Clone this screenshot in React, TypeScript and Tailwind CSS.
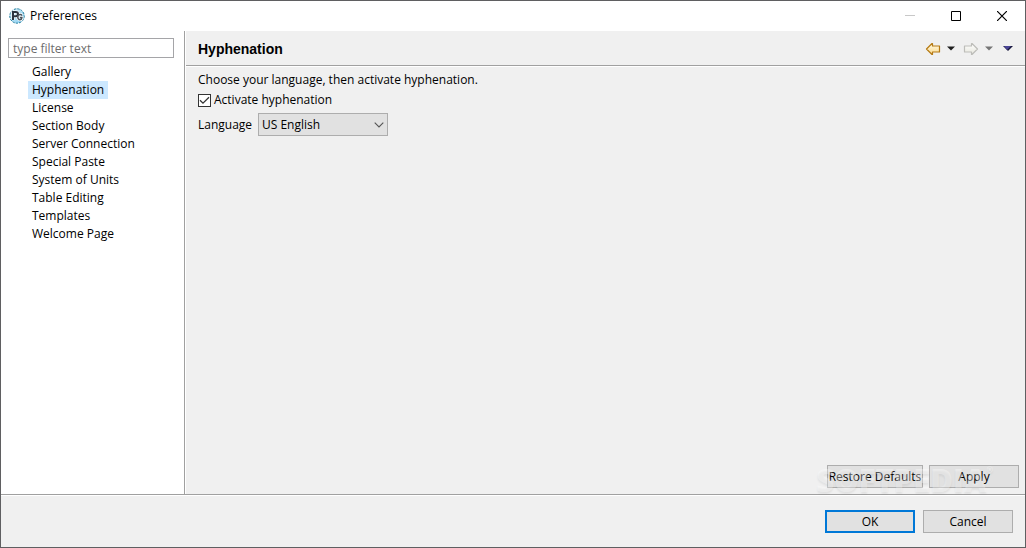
import { useState } from "react";

const pages = [
  "Gallery",
  "Hyphenation",
  "License",
  "Section Body",
  "Server Connection",
  "Special Paste",
  "System of Units",
  "Table Editing",
  "Templates",
  "Welcome Page",
];

function AppIcon() {
  return (
    <svg width="16" height="16" viewBox="0 0 16 16" aria-hidden="true">
      <defs>
        <linearGradient id="badge" x1="0" y1="0" x2="1" y2="1">
          <stop offset="0" stopColor="#e4f6fd" />
          <stop offset="1" stopColor="#7cc8ee" />
        </linearGradient>
      </defs>
      <circle cx="8" cy="8" r="7.2" fill="url(#badge)" stroke="#1d7a9c" strokeWidth="1" strokeDasharray="2.4 1" />
      <path d="M4 12V4H6.8Q9 4 9 6.1Q9 8.2 6.8 8.2H4M13 7.4Q12.2 6.5 11 6.6Q8.8 7 8.8 9.2Q9 11.6 11 11.7Q12.8 11.5 12.9 9.6H11" fill="none" stroke="#ffffff" strokeWidth="3" />
      <path d="M4 12V4H6.8Q9 4 9 6.1Q9 8.2 6.8 8.2H4" fill="none" stroke="#2b3440" strokeWidth="2" />
      <path d="M13 7.4Q12.2 6.5 11 6.6Q8.8 7 8.8 9.2Q9 11.6 11 11.7Q12.8 11.5 12.9 9.6H11" fill="none" stroke="#4a525b" strokeWidth="1.5" />
    </svg>
  );
}

function Arrow({ forward = false }: { forward?: boolean }) {
  const id = forward ? "arrow-forward" : "arrow-back";
  return (
    <svg width="16" height="14" viewBox="0 0 16 14" aria-hidden="true">
      <defs>
        <linearGradient id={id} x1="0" y1="0" x2="0" y2="1">
          <stop offset="0" stopColor={forward ? "#ffffff" : "#fffbe8"} />
          <stop offset="1" stopColor={forward ? "#e6e6dc" : "#fbd98a"} />
        </linearGradient>
      </defs>
      <path
        d={forward ? "M14.5 7L9 1.5H8.5V4H1.5V10H8.5V12.5H9Z" : "M1.5 7L7 1.5H7.5V4H14.5V10H7.5V12.5H7Z"}
        fill={`url(#${id})`}
        stroke={forward ? "#bdbdb9" : "#b57a14"}
        strokeWidth="1.2"
        strokeLinejoin="round"
      />
    </svg>
  );
}

function Triangle({ color }: { color: string }) {
  return (
    <svg width="8" height="5" viewBox="0 0 8 5" aria-hidden="true">
      <path d="M0 .5H8L4 4.5Z" fill={color} />
    </svg>
  );
}

const buttonClass = "h-[23px] border border-[#adadad] bg-[#e1e1e1] text-center leading-4";

export default function App() {
  const [page, setPage] = useState("Hyphenation");
  return (
    <div className="flex min-h-screen flex-col border border-[#5f5f61] bg-[#f0f0f0] font-['Open_Sans','Noto_Sans',sans-serif] text-[12px] leading-4 text-black">
      <header className="flex h-[30px] items-center bg-white pl-2">
        <AppIcon />
        <h1 className="ml-[5px] grow">Preferences</h1>
        <button type="button" aria-label="Minimize" disabled className="flex h-full w-[46px] items-center justify-center">
          <svg width="10" height="10" viewBox="0 0 10 10"><path d="M0 4.5H10" stroke="#c8c8c8" /></svg>
        </button>
        <button type="button" aria-label="Maximize" className="flex h-full w-[46px] items-center justify-center">
          <svg width="10" height="10" viewBox="0 0 10 10"><path d="M.5 .5H9.5V9.5H.5Z" fill="none" stroke="#000" /></svg>
        </button>
        <button type="button" aria-label="Close" className="flex h-full w-[46px] items-center justify-center">
          <svg width="10" height="10" viewBox="0 0 10 10"><path d="M0 0L10 10M10 0L0 10" stroke="#000" strokeWidth="1.2" /></svg>
        </button>
      </header>

      <div className="flex grow">
        <aside className="w-[184px] shrink-0 border-r border-[#a0a0a0] bg-white pt-[7px]">
          <div className="pr-[10px] pl-[7px]">
            <input
              type="text"
              aria-label="Filter preferences"
              placeholder="type filter text"
              className="block h-5 w-full border border-[#a5a5a8] bg-white px-1 placeholder:text-[#6d6d6d]"
            />
          </div>
          <nav aria-label="Preference pages" className="mt-[5px] flex flex-col items-start pl-[27px]">
            {pages.map((name) => (
              <button
                key={name}
                type="button"
                onClick={() => setPage(name)}
                className={name === page ? "h-[18px] bg-[#cce8ff] px-1" : "h-[18px] px-1"}
              >
                {name}
              </button>
            ))}
          </nav>
        </aside>

        <main className="flex grow flex-col border-l border-white">
          <div className="flex h-[35px] items-center border-b border-[#a0a0a0] px-3 pt-px">
            <h2 className="grow font-['Liberation_Sans',Arial,sans-serif] text-[14px] font-bold">{page}</h2>
            <div className="flex items-center">
              <button type="button" aria-label="Back"><Arrow /></button>
              <button type="button" aria-label="Back history" className="ml-[6px]"><Triangle color="#1e1e1e" /></button>
              <button type="button" aria-label="Forward" className="ml-2"><Arrow forward /></button>
              <button type="button" aria-label="Forward history" className="ml-[6px]"><Triangle color="#757575" /></button>
              <button type="button" aria-label="Menu" className="ml-[10px]">
                <svg width="10" height="5" viewBox="0 0 10 5"><path d="M0 0H10L5 5Z" fill="#16163a" /><path d="M1 0H8L4 4Z" fill="#4a4596" /></svg>
              </button>
            </div>
          </div>
          <form className="flex grow flex-col border-t border-white pl-3" onSubmit={(e) => e.preventDefault()}>
            <p className="mt-[5px]">Choose your language, then activate hyphenation.</p>
            <label className="mt-1 flex items-center self-start">
              <span className="grid size-[13px]">
                <input type="checkbox" defaultChecked className="peer col-start-1 row-start-1 size-[13px] appearance-none border border-[#333] bg-white" />
                <svg className="pointer-events-none col-start-1 row-start-1 hidden peer-checked:block" width="13" height="13" viewBox="0 0 13 13">
                  <path d="M2 6.2L5 9.2L11 3.2" fill="none" stroke="#333" strokeWidth="1.3" />
                </svg>
              </span>
              <span className="ml-[3px]">Activate hyphenation</span>
            </label>
            <div className="mt-[5px] flex items-center">
              <label htmlFor="language" className="w-[60px]">Language</label>
              <div className="grid">
                <select id="language" className="col-start-1 row-start-1 h-[23px] w-[130px] appearance-none border border-[#adadad] bg-[#e1e1e1] pl-[3px]">
                  <option>US English</option>
                </select>
                <svg className="pointer-events-none col-start-1 row-start-1 mr-1 self-center justify-self-end" width="10" height="6" viewBox="0 0 10 6">
                  <path d="M.7 .7L5 5L9.3 .7" fill="none" stroke="#555" strokeWidth="1.1" />
                </svg>
              </div>
            </div>
            <div className="relative mt-auto flex justify-end pr-[6px] pb-[6px]">
              <button type="button" className={`${buttonClass} w-[96px]`}>Restore Defaults</button>
              <button type="button" className={`${buttonClass} ml-[6px] w-[90px]`}>Apply</button>
              <div
                aria-hidden="true"
                className="pointer-events-none absolute right-[32px] bottom-0 flex items-start font-['Open_Sans',sans-serif] text-[31px] leading-7 font-extrabold text-white/35 [text-shadow:0_2px_2px_rgb(0_0_0/0.06)]"
              >
                SOFTPEDIA<span className="text-[8px] leading-2">®</span>
              </div>
            </div>
          </form>
        </main>
      </div>

      <footer className="border-t border-[#a0a0a0]">
        <div className="flex justify-end gap-2 border-t border-white pt-[14px] pr-3 pb-[14px]">
          <button type="button" className="h-[23px] w-[90px] border-2 border-[#0078d7] bg-[#e1e1e1] leading-4">OK</button>
          <button type="button" className={`${buttonClass} w-[90px]`}>Cancel</button>
        </div>
      </footer>
    </div>
  );
}
